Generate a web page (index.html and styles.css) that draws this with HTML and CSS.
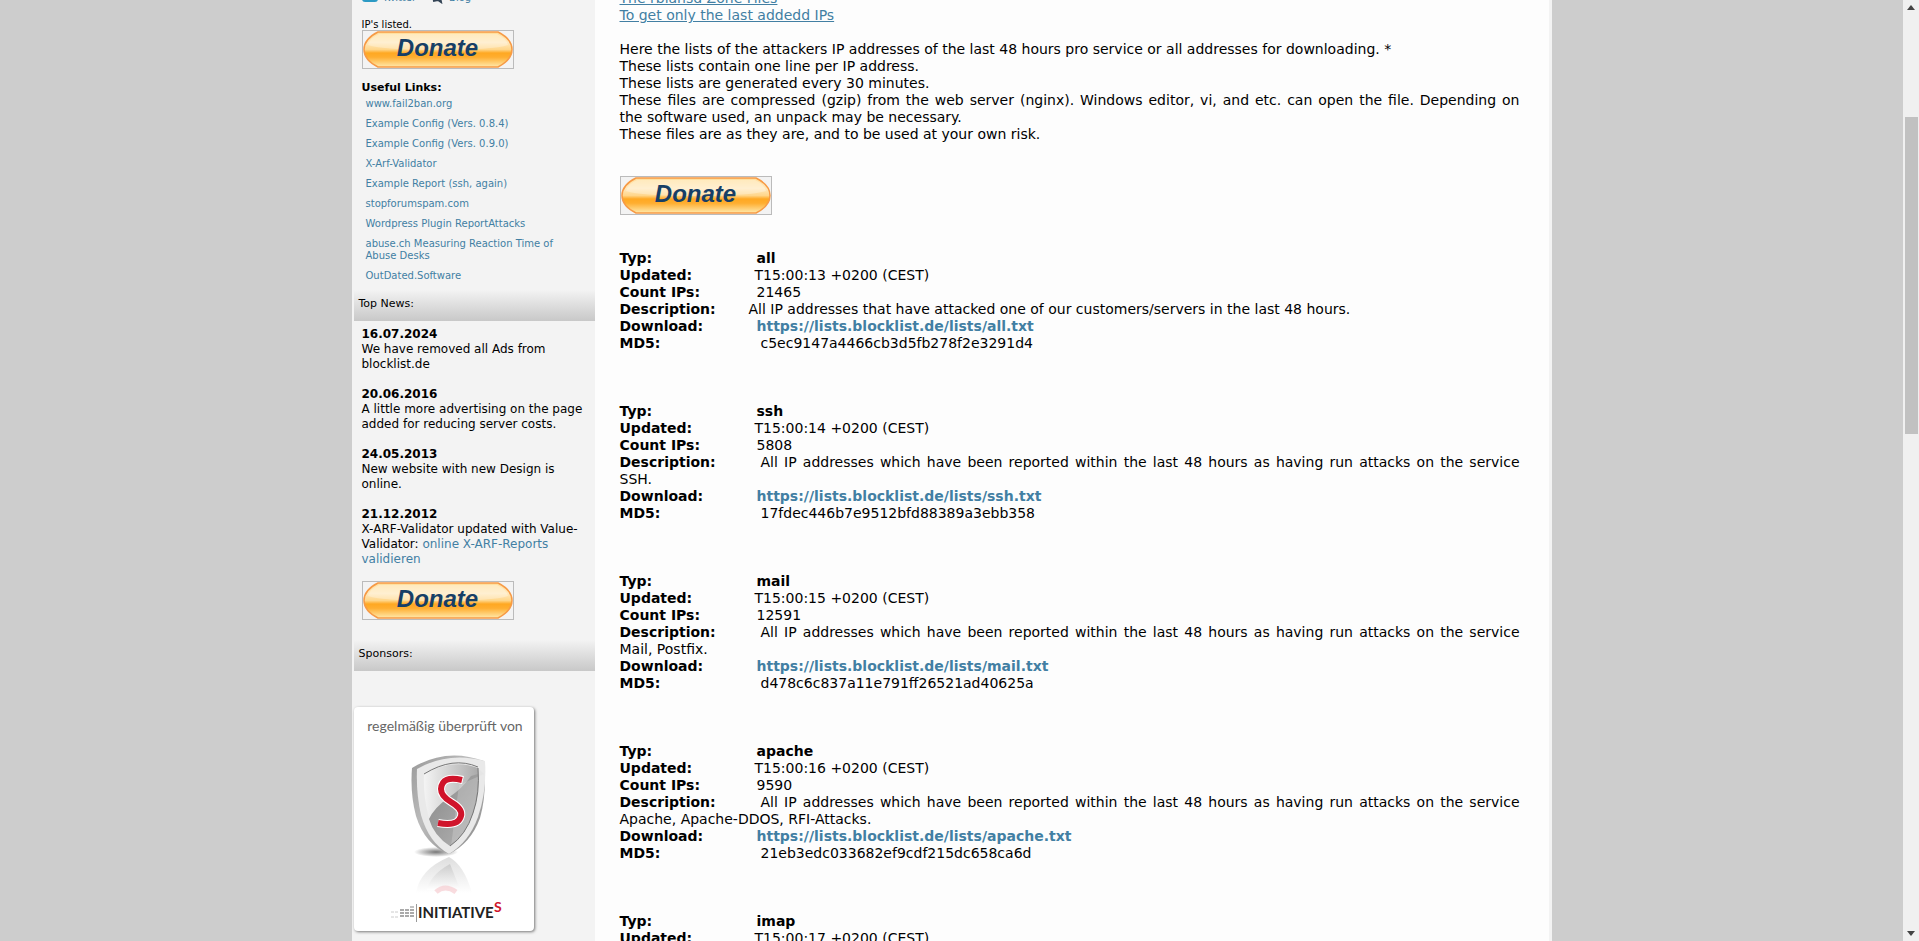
FILE: index.html
```html
<!DOCTYPE html>
<html lang="en">
<head>
<meta charset="utf-8">
<title>blocklist.de - Export lists</title>
<link rel="stylesheet" href="styles.css">
</head>
<body>
<svg class="defs" width="0" height="0" aria-hidden="true">
  <defs>
    <linearGradient id="gold" x1="0" y1="0" x2="0" y2="1">
      <stop offset="0" stop-color="#ffdf9c"/>
      <stop offset=".3" stop-color="#ffe9bd"/>
      <stop offset=".5" stop-color="#ffd68a"/>
      <stop offset=".6" stop-color="#ffa822"/>
      <stop offset=".72" stop-color="#ffae30"/>
      <stop offset="1" stop-color="#ffe9ac"/>
    </linearGradient>
    <symbol id="pill" viewBox="0 0 150 37">
      <path d="M15 1H135Q149 8 149 18.500Q149 29 135 36H15Q1 29 1 18.500Q1 8 15 1Z" fill="url(#gold)" stroke="#f79a45" stroke-width="1.500"/>
      <path d="M16 3H134Q143 7 145 14Q130 19 75 19T5 14Q7 7 16 3Z" fill="#fff" opacity=".3"/>
    </symbol>
  </defs>
</svg>
<div class="shell">
  <div class="page">
    <div class="wrap">
      <aside class="sidebar">
        <div class="social">
          <a href="#"><svg width="16" height="12" viewBox="0 0 16 12"><rect width="16" height="10" rx="3" fill="#2c9ac4"/></svg>Twitter</a>
          <a href="#"><svg width="14" height="12" viewBox="0 0 14 12"><path d="M3 9L8 8L11 10L10 5" fill="none" stroke="#345" stroke-width="2"/></svg>Blog</a>
        </div>
        <div class="block">
          <p class="listed">IP's listed.</p>
          <button class="donate" type="button"><svg aria-hidden="true"><use href="#pill"/></svg><span>Donate</span></button>
          <h2 class="links-title">Useful Links:</h2>
          <ul class="links">
            <li><a href="#">www.fail2ban.org</a></li>
            <li><a href="#">Example Config (Vers. 0.8.4)</a></li>
            <li><a href="#">Example Config (Vers. 0.9.0)</a></li>
            <li><a href="#">X-Arf-Validator</a></li>
            <li><a href="#">Example Report (ssh, again)</a></li>
            <li><a href="#">stopforumspam.com</a></li>
            <li><a href="#">Wordpress Plugin ReportAttacks</a></li>
            <li><a href="#">abuse.ch Measuring Reaction Time of Abuse Desks</a></li>
            <li><a href="#">OutDated.Software</a></li>
          </ul>
        </div>
        <h2 class="bar">Top News:</h2>
        <div class="block news">
          <p><b>16.07.2024</b><br>We have removed all Ads from blocklist.de</p>
          <p><b>20.06.2016</b><br>A little more advertising on the page added for reducing server costs.</p>
          <p><b>24.05.2013</b><br>New website with new Design is online.</p>
          <p><b>21.12.2012</b><br>X-ARF-Validator updated with Value-Validator: <a href="#">online X-ARF-Reports validieren</a></p>
          <button class="donate" type="button"><svg aria-hidden="true"><use href="#pill"/></svg><span>Donate</span></button>
        </div>
        <h2 class="bar">Sponsors:</h2>
        <a class="badge" href="#">
          <svg width="180" height="224" viewBox="0 0 180 224" role="img" aria-label="Initiative-S">
            <defs>
              <linearGradient id="rim" x1="0" y1="0" x2="1" y2="1"><stop offset="0" stop-color="#999"/><stop offset=".4" stop-color="#bbb"/><stop offset="1" stop-color="#888"/></linearGradient>
              <linearGradient id="face" x1="0" y1="0" x2="1" y2="0"><stop offset="0" stop-color="#f4f4f4"/><stop offset="1" stop-color="#aaa"/></linearGradient>
              <linearGradient id="dark" x1="0" y1="0" x2="1" y2="1"><stop offset="0" stop-color="#888"/><stop offset="1" stop-color="#b5b5b5"/></linearGradient>
              <linearGradient id="fade" x1="0" y1="0" x2="0" y2="1"><stop offset="0" stop-color="#ccc"/><stop offset="1" stop-color="#fff"/></linearGradient>
              <radialGradient id="shade"><stop offset="0" stop-color="#777"/><stop offset="1" stop-color="#fff"/></radialGradient>
            </defs>
            <text class="badge-top" x="91" y="24" text-anchor="middle">regelmäßig überprüft von</text>
            <ellipse cx="82" cy="145" rx="22" ry="5" fill="url(#shade)"/>
            <path d="M58 61Q92 40 130 54Q133 87 126 111Q117 136 95 147Q71 138 62 109Q56 86 58 61Z" fill="url(#rim)"/>
            <path d="M63 62Q94 44 131 54Q133 84 124 110Q115 135 95 147Q75 136 67 108Q62 86 63 62Z" fill="#e9e9e9"/>
            <path d="M70 67Q99 51 124 61Q126 86 119 106Q112 128 96 139Q80 129 74 107Q69 87 70 67Z" fill="url(#face)"/>
            <path d="M124 67Q125 88 119 106Q112 128 96 139Q80 129 75 112Q80 101 94 91Q109 81 117 69Z" fill="url(#dark)"/>
            <path d="M130 67L105 78L97 139Q112 128 119 106Q125 84 124 61" fill="#ddd" opacity=".3"/>
            <path d="M70 67Q99 49 124 60M124 61Q126 86 119 106Q112 128 96 139" fill="none" stroke="#777" stroke-width="1"/>
            <path d="M109 73Q88 68 87 82Q87 89 97 95Q109 102 107 109Q104 120 84 116" fill="none" stroke="#fff" stroke-width="8"/>
            <path d="M108 73Q88 68 87 82Q87 89 97 95Q109 102 107 109Q104 120 84 116" fill="none" stroke="#d0142b" stroke-width="6"/>
            <path d="M62 186Q66 162 95 150Q110 158 118 186Z" fill="url(#fade)" opacity=".65"/>
            <path d="M73 183Q76 168 96 157L106 182Z" fill="url(#fade)"/>
            <path d="M82 185Q91 177 102 185" fill="none" stroke="#f5c5c9" stroke-width="5" opacity=".6"/>
            <path d="M37 205H44M37 210H44" stroke="#ccc" stroke-width="1" stroke-dasharray="3 1"/>
            <path d="M46 203H60M46 206H60M46 209H60" stroke="#aaa" stroke-width="2" stroke-dasharray="4 1"/>
            <path d="M56 200H60" stroke="#888" stroke-width="1"/>
            <path d="M62.500 197V215" stroke="#999"/>
            <text class="badge-name" x="64" y="211">INITIATIVE</text>
            <text class="badge-s" x="140" y="205">S</text>
          </svg>
        </a>
      </aside>
      <main class="content">
        <nav class="toc"><a href="#">The rblansd Zone Files</a><br><a href="#">To get only the last addedd IPs</a></nav>
        <p>Here the lists of the attackers IP addresses of the last 48 hours pro service or all addresses for downloading. *<br>
        These lists contain one line per IP address.<br>
        These lists are generated every 30 minutes.<br>
        These files are compressed (gzip) from the web server (nginx). Windows editor, vi, and etc. can open the file. Depending on the&nbsp;software used, an unpack may be necessary.<br>
        These files are as they are, and to be used at your own risk.</p>
        <button class="donate" type="button"><svg aria-hidden="true"><use href="#pill"/></svg><span>Donate</span></button>
        <section class="list">
          <div><b class="key">Typ:</b><b>all</b></div>
          <div><b class="key key-time">Updated:</b>T15:00:13 +0200 (CEST)</div>
          <div><b class="key">Count IPs:</b>21465</div>
          <div><b class="key key-short">Description:</b>All IP addresses that have attacked one of our customers/servers in the last 48 hours.</div>
          <div><b class="key">Download:</b><a href="#">https://lists.blocklist.de/lists/all.txt</a></div>
          <div><b class="key key-long">MD5:</b>c5ec9147a4466cb3d5fb278f2e3291d4</div>
        </section>
        <section class="list">
          <div><b class="key">Typ:</b><b>ssh</b></div>
          <div><b class="key key-time">Updated:</b>T15:00:14 +0200 (CEST)</div>
          <div><b class="key">Count IPs:</b>5808</div>
          <div><b class="key key-long">Description:</b>All IP addresses which have been reported within the last 48 hours as having run attacks on the service SSH.</div>
          <div><b class="key">Download:</b><a href="#">https://lists.blocklist.de/lists/ssh.txt</a></div>
          <div><b class="key key-long">MD5:</b>17fdec446b7e9512bfd88389a3ebb358</div>
        </section>
        <section class="list">
          <div><b class="key">Typ:</b><b>mail</b></div>
          <div><b class="key key-time">Updated:</b>T15:00:15 +0200 (CEST)</div>
          <div><b class="key">Count IPs:</b>12591</div>
          <div><b class="key key-long">Description:</b>All IP addresses which have been reported within the last 48 hours as having run attacks on the service Mail, Postfix.</div>
          <div><b class="key">Download:</b><a href="#">https://lists.blocklist.de/lists/mail.txt</a></div>
          <div><b class="key key-long">MD5:</b>d478c6c837a11e791ff26521ad40625a</div>
        </section>
        <section class="list">
          <div><b class="key">Typ:</b><b>apache</b></div>
          <div><b class="key key-time">Updated:</b>T15:00:16 +0200 (CEST)</div>
          <div><b class="key">Count IPs:</b>9590</div>
          <div><b class="key key-long">Description:</b>All IP addresses which have been reported within the last 48 hours as having run attacks on the service Apache, Apache-DDOS, RFI-Attacks.</div>
          <div><b class="key">Download:</b><a href="#">https://lists.blocklist.de/lists/apache.txt</a></div>
          <div><b class="key key-long">MD5:</b>21eb3edc033682ef9cdf215dc658ca6d</div>
        </section>
        <section class="list">
          <div><b class="key">Typ:</b><b>imap</b></div>
          <div><b class="key key-time">Updated:</b>T15:00:17 +0200 (CEST)</div>
        </section>
      </main>
    </div>
  </div>
  <div class="scrollbar" aria-hidden="true">
    <svg width="8" height="5" viewBox="0 0 8 5"><path d="M0 5L4 0L8 5Z" fill="#444"/></svg>
    <div class="track"><div class="thumb"></div></div>
    <svg width="8" height="5" viewBox="0 0 8 5"><path d="M0 0L4 5L8 0Z" fill="#444"/></svg>
  </div>
</div>
</body>
</html>
```
FILE: styles.css
```css
* { box-sizing: border-box; }
body {
  margin: 0;
  background: #cdcdcd;
  color: #000;
  font-family: Verdana, "DejaVu Sans", sans-serif;
  font-size: 14px;
  line-height: 17px;
}
a { color: #427fa3; text-decoration: none; }
p, h2, ul { margin: 0; padding: 0; }
.defs { position: absolute; }

.shell { display: flex; height: 100vh; overflow: hidden; }
.page { flex: 1; overflow: hidden; }
.wrap {
  display: grid;
  grid-template-columns: 243px 1fr;
  max-width: 1200px;
  min-height: 100%;
  margin: 0 auto;
  padding-right: 3px;
  background: #f3f3f3;
}

.sidebar { padding-left: 2px; font-size: 12px; line-height: 15px; }
.social {
  display: flex;
  gap: 14px;
  margin-top: -8px;
  padding-left: 8px;
  font-size: 10px;
  line-height: 12px;
}
.social a { display: flex; gap: 5px; }
.block { padding: 14px 8px 0; }
.listed { padding-top: 1px; font-size: 10px; line-height: 11px; }
.links-title { margin-top: 12px; font-size: 11px; line-height: 14px; }
.links { padding: 3px 4px 0; list-style: none; font-size: 10px; line-height: 12px; }
.links li { padding-bottom: 8px; }
.bar {
  height: 31px;
  padding: 7px 5px 0;
  background: linear-gradient(#f3f3f3, #c8c8c8);
  font-size: 11px;
  font-weight: normal;
  line-height: 14px;
}
.news { padding: 6px 8px 20px; }
.news p { padding-bottom: 15px; }
.news p:last-of-type { padding-bottom: 14px; }

.donate {
  position: relative;
  display: block;
  width: 152px;
  height: 39px;
  padding: 0;
  border: 1px solid #bbb;
  background: #f3f3f3;
  color: #173f66;
  font: italic bold 24px/34px "Liberation Sans", Arial, sans-serif;
}
.donate svg { position: absolute; inset: 0; width: 100%; height: 100%; }
.donate span { position: relative; display: block; height: 37px; }

.badge {
  display: block;
  width: 180px;
  margin-top: 36px;
  border-radius: 4px;
  background: #fff;
  box-shadow: 1px 1px 3px #777;
}
.badge svg { display: block; }
.badge-top { fill: #666; font: 14px Lato, sans-serif; }
.badge-name { fill: #222; font: bold 15px Lato, sans-serif; }
.badge-s { fill: #d0142b; font: bold 14px Lato, sans-serif; }

.content { padding: 0 29px 0 25px; background: #fdfdfd; text-align: justify; }
.toc { margin: -10px 0 17px; }
.toc a { text-decoration: underline; }
.content .donate { margin: 33px 0 35px; }
.list { margin-bottom: 51px; }
.list a { font-weight: bold; }
.key { display: inline-block; width: 137px; text-align: left; }
.key-time { width: 135px; }
.key-short { width: 129px; }
.key-long { width: 141px; }

.scrollbar {
  display: flex;
  flex-direction: column;
  align-items: center;
  width: 16px;
  padding: 5px 0;
  background: #f0f0f0;
}
.track { flex: 1; width: 13px; padding-top: 107px; }
.thumb { height: 39%; background: #c1c1c1; }
```
